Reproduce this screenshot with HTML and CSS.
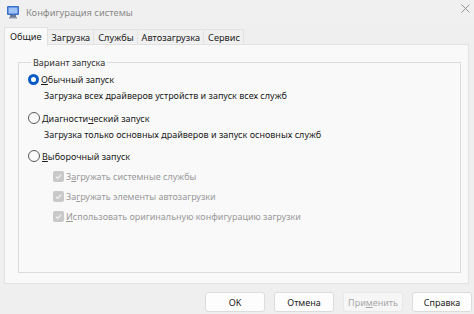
FILE: index.html
```html
<!DOCTYPE html>
<html lang="ru">
<head>
    <meta charset="UTF-8">
    <title>Конфигурация системы</title>
    <link rel="stylesheet" href="styles.css">
</head>
<body>
    <div class="window">
        <div class="title-bar">
            <svg class="app-icon" width="14" height="14" viewBox="0 0 14 14">
                <rect x="1" y="1" width="12" height="9" rx="1" fill="#3a6fd0"/>
                <rect x="2.5" y="2.5" width="9" height="6" fill="#9fc3f5"/>
                <rect x="4" y="10" width="6" height="2" fill="#6b7a90"/>
                <rect x="3" y="12" width="8" height="1.5" fill="#8a96a8"/>
            </svg>
            <span class="title">Конфигурация системы</span>
            <svg class="close" width="9" height="9" viewBox="0 0 9 9">
                <path d="M0.5 0.5 L8.5 8.5 M8.5 0.5 L0.5 8.5" stroke="#8c8c8c" stroke-width="0.9"/>
            </svg>
        </div>

        <div class="tabs">
            <div class="tab active">Общие</div>
            <div class="tab">Загрузка</div>
            <div class="tab">Службы</div>
            <div class="tab">Автозагрузка</div>
            <div class="tab">Сервис</div>
        </div>

        <div class="panel">
            <fieldset class="group">
                <legend>Вариант запуска</legend>

                <div class="option first">
                    <span class="radio checked"></span>
                    <span><u>О</u>бычный запуск</span>
                </div>
                <div class="hint">Загрузка всех драйверов устройств и запуск всех служб</div>

                <div class="option">
                    <span class="radio"></span>
                    <span>Диагности<u>ч</u>еский запуск</span>
                </div>
                <div class="hint">Загрузка только основных драйверов и запуск основных служб</div>

                <div class="option last">
                    <span class="radio"></span>
                    <span><u>В</u>ыборочный запуск</span>
                </div>

                <div class="check-list">
                    <div class="check">
                        <span class="box"><svg width="9" height="9" viewBox="0 0 10 10"><path d="M2 5.2 L4.1 7.2 L8 2.8" fill="none" stroke="#f4f4f4" stroke-width="1.3"/></svg></span>
                        <span>З<u>а</u>гружать системные службы</span>
                    </div>
                    <div class="check">
                        <span class="box"><svg width="9" height="9" viewBox="0 0 10 10"><path d="M2 5.2 L4.1 7.2 L8 2.8" fill="none" stroke="#f4f4f4" stroke-width="1.3"/></svg></span>
                        <span>За<u>г</u>ружать элементы автозагрузки</span>
                    </div>
                    <div class="check">
                        <span class="box"><svg width="9" height="9" viewBox="0 0 10 10"><path d="M2 5.2 L4.1 7.2 L8 2.8" fill="none" stroke="#f4f4f4" stroke-width="1.3"/></svg></span>
                        <span><u>И</u>спользовать оригинальную конфигурацию загрузки</span>
                    </div>
                </div>
            </fieldset>
        </div>

        <div class="footer">
            <div class="button">OK</div>
            <div class="button">Отмена</div>
            <div class="button disabled">При<u>м</u>енить</div>
            <div class="button">Справка</div>
        </div>
    </div>
</body>
</html>
```

FILE: styles.css
```css
body {
    margin: 0;
    padding: 0;
    background-color: #efefef;
    font-family: "Noto Sans", "Open Sans", sans-serif;
    font-size: 9px;
    color: #1b1b1b;
}
.window {
    width: 474px;
    height: 314px;
    display: flex;
    flex-direction: column;
    overflow: hidden;
}
.title-bar {
    height: 24px;
    display: flex;
    align-items: center;
    padding: 0 4px 0 6px;
    background-color: #f0f0f0;
}
.app-icon {
    margin-right: 6px;
}
.title {
    flex-grow: 1;
    color: #8a8a8a;
    font-size: 9.3px;
}
.close {
    margin-top: -7px;
}
.tabs {
    display: flex;
    margin: 4px 0 0 4px;
    height: 16px;
    font-size: 9.2px;
}
.tab {
    padding: 0 3px 0 4px;
    border: 1px solid #e2e2e2;
    border-bottom: none;
    border-left: none;
    background-color: #f0f0f0;
    line-height: 15px;
    margin-top: 1px;
}
.tab.active {
    background-color: #f9f9f9;
    border-left: 1px solid #e2e2e2;
    margin-top: -1px;
    padding: 0 5px 0 5px;
    line-height: 18px;
    height: 18px;
    position: relative;
    z-index: 1;
}
.panel {
    margin: 0 5px 0 4px;
    height: 240px;
    background-color: #f9f9f9;
    border: 1px solid #e2e2e2;
    padding: 11px 7px 10px 13px;
    box-sizing: border-box;
}
.group {
    margin: 0;
    height: 100%;
    box-sizing: border-box;
    border: 1px solid #dcdcdc;
    padding: 0 0 0 9px;
}
.group legend {
    padding: 0 2px;
    margin-left: 3px;
    color: #333;
}
.option {
    display: flex;
    align-items: center;
    height: 14px;
    margin-top: 8px;
}
.option.first {
    margin-top: 3px;
}
.option.last {
    margin-top: 7px;
}
.radio {
    width: 10px;
    height: 10px;
    border: 1px solid #5a5a5a;
    border-radius: 50%;
    margin-right: 2px;
    background-color: #fbfbfb;
    box-sizing: content-box;
}
.radio.checked {
    border: 3.5px solid #0a5bc4;
    width: 5px;
    height: 5px;
    background-color: #fff;
}
.hint {
    margin: 3px 0 0 16px;
    height: 14px;
    line-height: 14px;
}
.check-list {
    margin: 6px 0 0 25px;
    color: #9a9a9a;
}
.check {
    display: flex;
    align-items: center;
    height: 14px;
    margin-bottom: 6px;
}
.box {
    width: 11px;
    height: 11px;
    background-color: #c9c9c9;
    border-radius: 2px;
    margin-right: 2px;
    display: flex;
    align-items: center;
    justify-content: center;
}
.footer {
    flex-grow: 1;
    display: flex;
    justify-content: flex-end;
    align-items: flex-end;
    gap: 9px;
    padding: 0 2px 2px 0;
}
.button {
    width: 60px;
    height: 20px;
    box-sizing: border-box;
    background-color: #fdfdfd;
    border: 1px solid #dcdcdc;
    border-radius: 3px;
    display: flex;
    align-items: center;
    justify-content: center;
    color: #1b1b1b;
}
.button.disabled {
    color: #a8a8a8;
    background-color: #f6f6f6;
    border-color: #e8e8e8;
}
```
